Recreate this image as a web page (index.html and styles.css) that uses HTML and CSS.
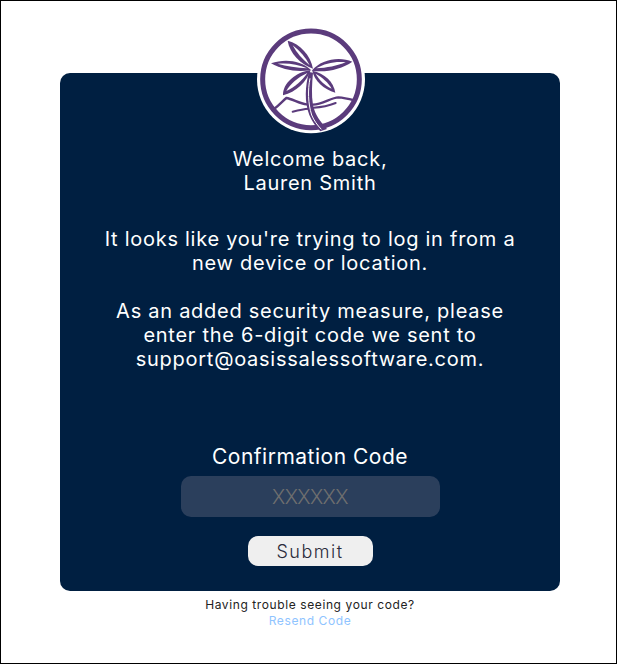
FILE: index.html
```html
<!DOCTYPE html>
<html lang="en">
<head>
  <meta charset="UTF-8">
  <meta name="viewport" content="width=device-width, initial-scale=1.0">
  <title>Confirm your device</title>
  <link rel="stylesheet" href="styles.css">
</head>
<body>
  <div class="frame">
    <section class="card">
      <div class="logo">
        <svg viewBox="48 48 324 324" width="108" height="108">
          <circle cx="210" cy="208" r="162" fill="#ffffff"/>
          <circle cx="210" cy="208" r="145" fill="#ffffff" stroke="#5b3b7c" stroke-width="15"/>
          <g fill="#5b3b7c">
            <path d="M140 92 C178 102 208 135 216 176 C178 162 146 130 140 92 Z"/>
            <path d="M90 160 C130 146 178 150 210 180 C170 188 125 180 90 160 Z"/>
            <path d="M334 155 C295 138 240 148 212 182 C255 188 302 178 334 155 Z"/>
            <path d="M126 256 C124 220 165 186 209 180 C197 216 165 246 126 256 Z"/>
            <path d="M283 248 C278 214 250 190 214 182 C220 212 248 238 283 248 Z"/>
          </g>
          <g fill="#ffffff">
            <path d="M155 106 C176 122 194 142 206 166 C184 148 166 128 155 106 Z"/>
            <path d="M110 161 C140 158 172 163 198 175 C168 173 136 169 110 161 Z"/>
            <path d="M314 157 C285 153 250 160 226 175 C256 174 290 167 314 157 Z"/>
            <path d="M136 243 C146 223 172 201 199 189 C184 212 160 232 136 243 Z"/>
            <path d="M272 236 C262 218 244 202 224 191 C234 210 252 226 272 236 Z"/>
          </g>
          <g fill="none" stroke="#5b3b7c" stroke-linecap="round">
            <path d="M100 296 C115 286 125 273 136 264 C155 267 175 281 197 283" stroke-width="7"/>
            <path d="M216 284 C245 283 270 263 292 262 C310 263 325 267 340 271" stroke-width="7"/>
            <path d="M155 305 C175 300 190 297 203 296" stroke-width="6"/>
            <path d="M218 293 C240 292 262 288 284 279" stroke-width="6"/>
          </g>
          <path d="M204 186 C192 230 190 275 205 315 C213 335 225 350 238 364 L258 357 C238 335 222 315 216 285 C211 255 213 220 216 188 Z" fill="#5b3b7c"/>
          <path d="M207 205 C200 240 201 280 212 315 C219 332 229 345 241 358" fill="none" stroke="#ffffff" stroke-width="3"/>
        </svg>
      </div>
      <div class="welcome">
        <p>Welcome back,<br>Lauren Smith</p>
      </div>
      <div class="message">
        <p>It looks like you're trying to log in from a<br>new device or location.</p>
        <p>As an added security measure, please<br>enter the 6-digit code we sent to<br>support@oasissalessoftware.com.</p>
      </div>
      <form class="code-form">
        <label for="code">Confirmation Code</label>
        <input type="text" id="code" placeholder="XXXXXX">
        <button type="button">Submit</button>
      </form>
    </section>
    <div class="help">
      <p>Having trouble seeing your code?</p>
      <a href="#">Resend Code</a>
    </div>
  </div>
</body>
</html>
```

FILE: styles.css
```css
body, p, label, input, button {
    margin: 0;
    padding: 0;
    font-family: Inter, "Liberation Sans", sans-serif;
}

.frame {
    box-sizing: border-box;
    height: 664px;
    border: 1px solid #000000;
    background-color: #ffffff;
    padding-top: 72px;
}

.card {
    position: relative;
    box-sizing: border-box;
    width: 500px;
    height: 518px;
    margin-left: 59px;
    padding-top: 74px;
    background-color: #001f41;
    border-radius: 10px;
    color: #ffffff;
    text-align: center;
    font-size: 20px;
    line-height: 24px;
    letter-spacing: 0.73px;
}

.logo {
    position: absolute;
    top: -47px;
    left: 197px;
    width: 108px;
    height: 108px;
}

.logo svg {
    display: block;
}

.message {
    margin-top: 32px;
}

.message p + p {
    margin-top: 24px;
}

.code-form {
    display: flex;
    flex-direction: column;
    align-items: center;
    margin-top: 74px;
}

.code-form label {
    font-size: 21px;
    line-height: 24px;
    letter-spacing: 0.5px;
}

.code-form input {
    box-sizing: border-box;
    width: 259px;
    height: 41px;
    margin-top: 7px;
    border: none;
    border-radius: 10px;
    background-color: #2b3f5c;
    color: #ffffff;
    text-align: center;
    font-size: 20px;
    font-weight: 300;
    letter-spacing: -0.6px;
}

.code-form input::placeholder {
    color: #6f6f6f;
    opacity: 1;
}

.code-form button {
    width: 125px;
    height: 30px;
    margin-top: 19px;
    border: none;
    border-radius: 10px;
    background-color: #efefef;
    color: #2b2b3a;
    font-size: 18px;
    font-weight: 300;
    letter-spacing: 1.5px;
}

.help {
    width: 500px;
    margin-top: 6px;
    margin-left: 59px;
    text-align: center;
    font-size: 12px;
    line-height: 15px;
    letter-spacing: 0.6px;
    color: #222222;
}

.help a {
    display: block;
    margin-top: 1px;
    color: #8fc4ff;
    text-decoration: none;
}
```
